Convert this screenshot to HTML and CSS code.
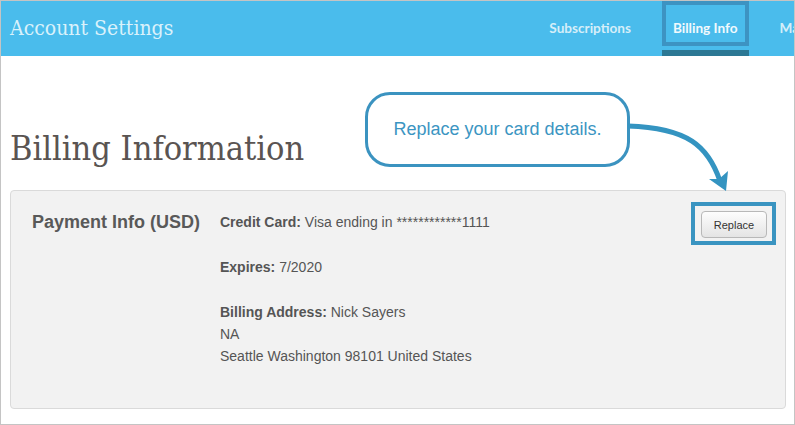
FILE: index.html
```html
<!DOCTYPE html>
<html>
<head>
<meta charset="utf-8">
<link rel="stylesheet" href="styles.css">
</head>
<body>
<div class="frame">
  <header class="topbar">
    <div class="brand">Account Settings</div>
    <nav class="nav">
      <a class="nav-item">Subscriptions</a>
      <a class="nav-item active">Billing Info<span class="mark"></span></a>
      <a class="nav-item">Manage</a>
    </nav>
  </header>
  <main class="content">
    <h1 class="title">Billing Information</h1>
    <section class="panel">
      <h2 class="panel-label">Payment Info (USD)</h2>
      <div class="details">
        <p><b>Credit Card:</b> Visa ending in ************1111</p>
        <p><b>Expires:</b> 7/2020</p>
        <p><b>Billing Address:</b> Nick Sayers<br>NA<br>Seattle Washington 98101 United States</p>
      </div>
      <div class="action">
        <button class="btn">Replace</button>
        <span class="mark"></span>
      </div>
    </section>
  </main>
  <div class="callout">Replace your card details.</div>
  <svg class="arrow" width="795" height="425" viewBox="0 0 795 425">
    <path d="M628,126 C688,128 708,146 720,181" fill="none" stroke="#3494c1" stroke-width="5"/>
    <polygon points="726,191 709,179 719,179 728,171" fill="#3494c1"/>
  </svg>
</div>
</body>
</html>
```
FILE: styles.css
```css
* { box-sizing: border-box; }
html, body { margin: 0; padding: 0; background: #fff; }
.frame {
  position: relative;
  width: 795px;
  height: 425px;
  border: 1px solid #c4c4c4;
  overflow: hidden;
  font-family: "Liberation Sans", Arial, sans-serif;
}
.topbar {
  height: 55px;
  background: #4abcec;
  display: flex;
  align-items: center;
  padding-left: 9px;
}
.brand {
  flex: 1;
  font-family: "DejaVu Serif Condensed", "DejaVu Serif", serif;
  font-stretch: condensed;
  font-size: 21px;
  color: #d9f1fb;
  margin-top: -1px;
}
.nav {
  display: flex;
  flex-shrink: 0;
  align-self: stretch;
  gap: 20px;
  margin-right: -45px;
}
.nav-item {
  position: relative;
  display: flex;
  align-items: center;
  padding: 5px 11px 0;
  font-family: Lato, sans-serif;
  font-weight: 700;
  font-size: 13.6px;
  color: #d5eef9;
  border-bottom: 6px solid transparent;
  white-space: nowrap;
}
.nav-item.active {
  color: #f1f9fd;
  border-bottom-color: #2c7894;
}
.nav-item .mark {
  position: absolute;
  left: 0; right: 0; top: 0; bottom: 4px;
  border: 4px solid #3d93c2;
}
.content { padding: 0 8px 0 9px; }
.title {
  margin: 72px 0 22px;
  font-family: "DejaVu Serif Condensed", "DejaVu Serif", serif;
  font-stretch: condensed;
  font-weight: 400;
  font-size: 34px;
  line-height: 40px;
  color: #5a5452;
}
.panel {
  display: flex;
  align-items: flex-start;
  height: 219px;
  background: #f2f2f2;
  border: 1px solid #dadada;
  border-radius: 4px;
  padding: 20px 18px 20px 21px;
}
.panel-label {
  width: 188px;
  margin: 0;
  font-size: 18px;
  line-height: 22px;
  font-weight: 700;
  color: #595959;
}
.details {
  flex: 1;
  font-size: 14px;
  line-height: 22px;
  color: #555;
}
.details p { margin: 0 0 23px; }
.details b { color: #555; }
.action { position: relative; }
.action .mark {
  position: absolute;
  left: -10px; right: -9px; top: -9px; bottom: -7px;
  border: 4px solid #3a94c1;
}
.btn {
  display: block;
  width: 66px;
  height: 27px;
  padding: 0;
  font-family: "Liberation Sans", Arial, sans-serif;
  font-size: 11px;
  color: #333;
  background: linear-gradient(#fdfdfd, #e4e4e4);
  border: 1px solid #b8b8b8;
  border-radius: 4px;
}
.callout {
  position: absolute;
  left: 364px;
  top: 91px;
  width: 265px;
  height: 75px;
  border: 3.5px solid #3b93c0;
  border-radius: 25px;
  background: #fff;
  display: flex;
  align-items: center;
  justify-content: center;
  padding-bottom: 1px;
  font-size: 18px;
  color: #3b95c2;
}
.arrow { position: absolute; left: -1px; top: -1px; pointer-events: none; }
```
